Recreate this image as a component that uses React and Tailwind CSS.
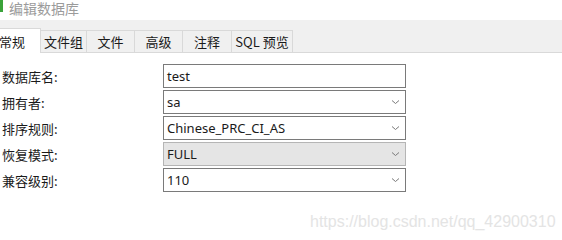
import React from "react";

const tabs = ["文件组", "文件", "高级", "注释", "SQL 预览"];
const tabWidths = ["w-[46px]", "w-[48px]", "w-[48px]", "w-[49px]", "w-[61px]"];

const rows = [
  { label: "数据库名:", value: "test", select: false },
  { label: "拥有者:", value: "sa", select: true },
  { label: "排序规则:", value: "Chinese_PRC_CI_AS", select: true },
  { label: "恢复模式:", value: "FULL", select: true, disabled: true },
  { label: "兼容级别:", value: "110", select: true },
];

function Chevron() {
  return (
    <svg width="9" height="6" viewBox="0 0 9 6" className="mr-[5px] shrink-0">
      <path d="M1 1.5 L4.5 4.5 L8 1.5" fill="none" stroke="#7a7a7a" strokeWidth="1" />
    </svg>
  );
}

export default function App() {
  return (
    <div className="relative w-[562px] h-[240px] overflow-hidden bg-white font-['Noto_Sans_CJK_SC','Microsoft_YaHei',sans-serif] text-[13px] text-[#1a1a1a]">
      {/* Title */}
      <div className="h-[20px] flex items-start gap-[6px]">
        <div className="w-[3px] h-[12px] bg-[#3aa33a]" />
        <div className="pt-[1px] text-[14px] text-[#9b9b9b] leading-[14px]">编辑数据库</div>
      </div>

      {/* Tab bar */}
      <div className="h-[33px] bg-[#f0f0f0] border-b border-[#d9d9d9] flex items-end">
        <div className="-ml-[3px] w-[44px] h-[25px] -mb-[1px] bg-white border-t border-r border-[#d9d9d9] flex items-center pl-[2px] leading-none">
          常规
        </div>
        {tabs.map((t, i) => (
          <div
            key={t}
            className={`${tabWidths[i]} h-[22px] border-t border-r border-[#d9d9d9] flex items-center justify-center leading-none`}
          >
            {t}
          </div>
        ))}
      </div>

      {/* Form */}
      <div className="mt-[11px] flex flex-col gap-[2px]">
        {rows.map((r) => (
          <div key={r.label} className="flex items-center h-[24px]">
            <div className="w-[163px] pl-[2px] leading-none">{r.label}</div>
            <div
              className={`w-[243px] h-[24px] flex items-center justify-between pl-[3px] border ${
                r.disabled ? "bg-[#e5e5e5] border-[#b5b5b5]" : "bg-white border-[#7a7a7a]"
              } font-['Noto_Sans','Noto_Sans_CJK_SC',sans-serif] text-[13px] leading-none`}
            >
              <span>{r.value}</span>
              {r.select && <Chevron />}
            </div>
          </div>
        ))}
      </div>

      {/* Watermark */}
      <div className="absolute left-[310px] top-[214px] font-['Liberation_Sans',sans-serif] text-[16px] text-[#e4e4e4] leading-none">
        https://blog.csdn.net/qq_42900310
      </div>
    </div>
  );
}
